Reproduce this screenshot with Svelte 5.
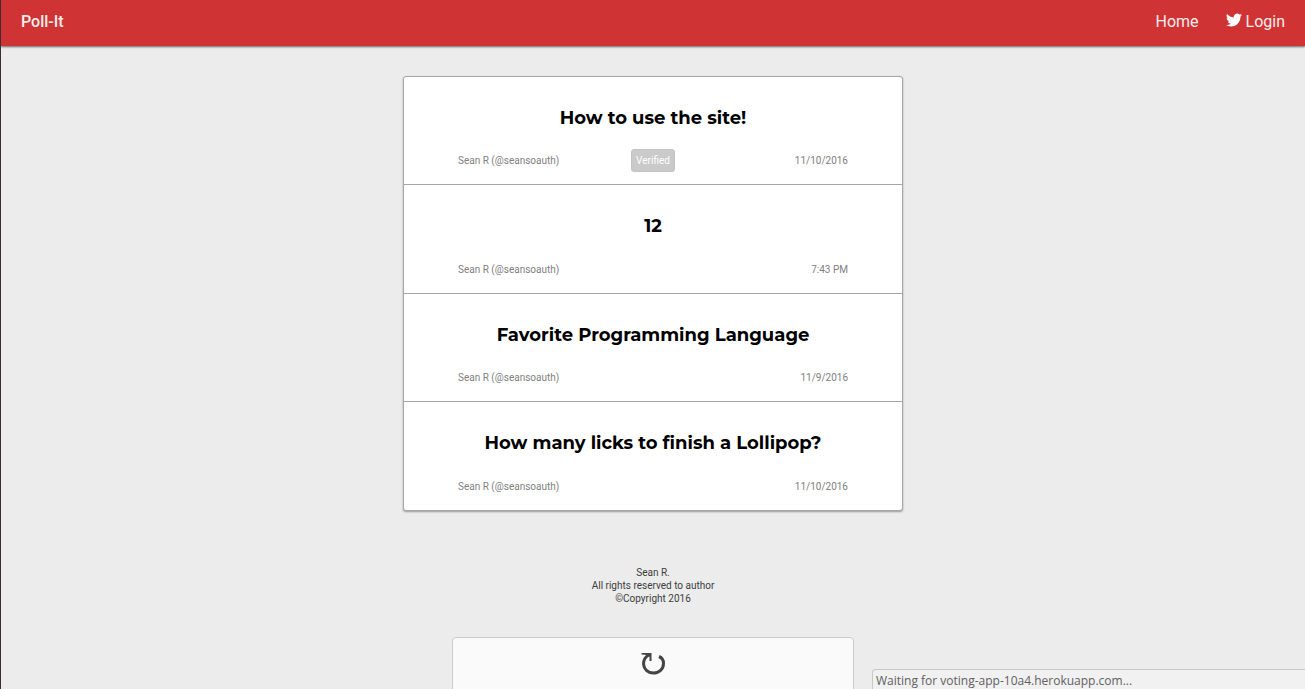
<script>
  const polls = [
    { title: 'How to use the site!', author: 'Sean R (@seansoauth)', verified: true, date: '11/10/2016' },
    { title: '12', author: 'Sean R (@seansoauth)', verified: false, date: '7:43 PM' },
    { title: 'Favorite Programming Language', author: 'Sean R (@seansoauth)', verified: false, date: '11/9/2016' },
    { title: 'How many licks to finish a Lollipop?', author: 'Sean R (@seansoauth)', verified: false, date: '11/10/2016' }
  ];
</script>

<div class="page">
  <header>
    <a class="brand" href="#home">Poll-It</a>
    <nav>
      <a href="#home">Home</a>
      <a href="#login">
        <svg viewBox="0 0 24 24" aria-hidden="true">
          <path d="M23.95 4.57a10 10 0 0 1-2.82.77 4.96 4.96 0 0 0 2.16-2.72c-.95.55-2 .96-3.13 1.18a4.92 4.92 0 0 0-8.38 4.48C7.69 8.1 4.07 6.13 1.64 3.16a4.92 4.92 0 0 0 1.52 6.57 4.9 4.9 0 0 1-2.23-.61v.06a4.92 4.92 0 0 0 3.95 4.83 5 5 0 0 1-2.21.08 4.94 4.94 0 0 0 4.6 3.42A9.87 9.87 0 0 1 0 19.54a13.99 13.99 0 0 0 7.56 2.21c9.05 0 14-7.5 14-13.98 0-.21 0-.42-.02-.63a9.94 9.94 0 0 0 2.46-2.55z" />
        </svg>
        Login
      </a>
    </nav>
  </header>

  <main>
    <ul class="polls">
      {#each polls as poll}
        <li>
          <h2>{poll.title}</h2>
          <div class="meta">
            <span>{poll.author}</span>
            {#if poll.verified}<span class="badge">Verified</span>{/if}
            <span class="date">{poll.date}</span>
          </div>
        </li>
      {/each}
    </ul>
  </main>

  <footer>
    <div>Sean R.</div>
    <div>All rights reserved to author</div>
    <div>©Copyright 2016</div>
  </footer>

  <button class="reload" aria-label="Reload">
    <svg viewBox="0 0 24 24" aria-hidden="true">
      <path class="arrow" d="M.5 1H10.500V9H8.500V4.500L6 3L.5 2.500z" />
      <path class="arc" d="M8 3C4 5 2.500 8.500 2.500 12C3 17.500 7 21 12.500 21C18 21 22.500 17 22.500 11.500C22.500 8.500 20.500 5.500 18 4.500" />
    </svg>
  </button>
</div>

<div class="status" role="status">Waiting for voting-app-10a4.herokuapp.com...</div>

<style>
  :global(body) {
    background: #ececec;
    font-family: Roboto, sans-serif;
  }

  .page {
    box-sizing: border-box;
    height: 100vh;
    overflow: hidden;
    border-left: 1px solid #3c2c33;
    display: flex;
    flex-direction: column;
    align-items: center;
  }

  header {
    box-sizing: border-box;
    flex: none;
    align-self: stretch;
    display: flex;
    align-items: center;
    justify-content: space-between;
    height: 46px;
    padding: 0 20px 2px;
    background: #cf3333;
    box-shadow: 0 1px 2px #666;
  }

  header a {
    color: #f4eeee;
    font-size: 16px;
    line-height: 20px;
    text-decoration: none;
  }

  header .brand {
    font-weight: 500;
  }

  nav {
    display: flex;
    gap: 27px;
  }

  nav a {
    display: flex;
    gap: 4px;
  }

  nav svg {
    width: 16px;
    height: 16px;
    fill: #fff;
  }

  main {
    flex: none;
    width: 100%;
    max-width: 500px;
    padding-top: 30px;
  }

  .polls {
    margin: 0;
    padding: 0;
    list-style: none;
    background: #fff;
    border: 1px solid #a6a6a6;
    border-radius: 3px;
    box-shadow: 0 1px 2px #999;
  }

  li {
    padding: 29px 54px 12px;
  }

  li + li {
    border-top: 1px solid #a6a6a6;
  }

  h2 {
    margin: 0 0 18px;
    color: #000;
    font-family: Montserrat, Inter, sans-serif;
    font-size: 18px;
    font-weight: 700;
    line-height: 24px;
    text-align: center;
  }

  li:nth-child(even) h2 {
    margin-bottom: 19px;
  }

  .meta {
    display: grid;
    grid-template-columns: 1fr auto 1fr;
    align-items: center;
    height: 24px;
    color: #808080;
    font-size: 10px;
    line-height: 13px;
  }

  .date {
    grid-column: 3;
    text-align: right;
  }

  .badge {
    padding: 4px;
    border: 1px solid #c4c4c4;
    border-radius: 3px;
    background: #cacaca;
    color: #fff;
  }

  footer {
    flex: none;
    padding: 55px 0 32px;
    color: #3c3c3c;
    font-size: 10px;
    line-height: 13px;
    text-align: center;
  }

  .reload {
    box-sizing: border-box;
    flex: none;
    display: flex;
    justify-content: center;
    width: 100%;
    max-width: 402px;
    height: 64px;
    padding: 14px;
    border: 1px solid #ccc;
    border-radius: 4px;
    background: #fafafa;
  }

  .reload svg {
    width: 24px;
    height: 24px;
  }

  .arrow {
    fill: #444;
  }

  .arc {
    fill: none;
    stroke: #444;
    stroke-width: 3;
  }

  .status {
    box-sizing: border-box;
    position: fixed;
    right: 0;
    bottom: 0;
    width: 433px;
    height: 20px;
    padding: 2px 3px;
    border: solid #c8c8c8;
    border-width: 1px 0 0 1px;
    border-top-left-radius: 4px;
    background: #f1f1f1;
    color: #606060;
    font-family: "Open Sans", sans-serif;
    font-size: 12px;
    line-height: 17px;
  }
</style>
